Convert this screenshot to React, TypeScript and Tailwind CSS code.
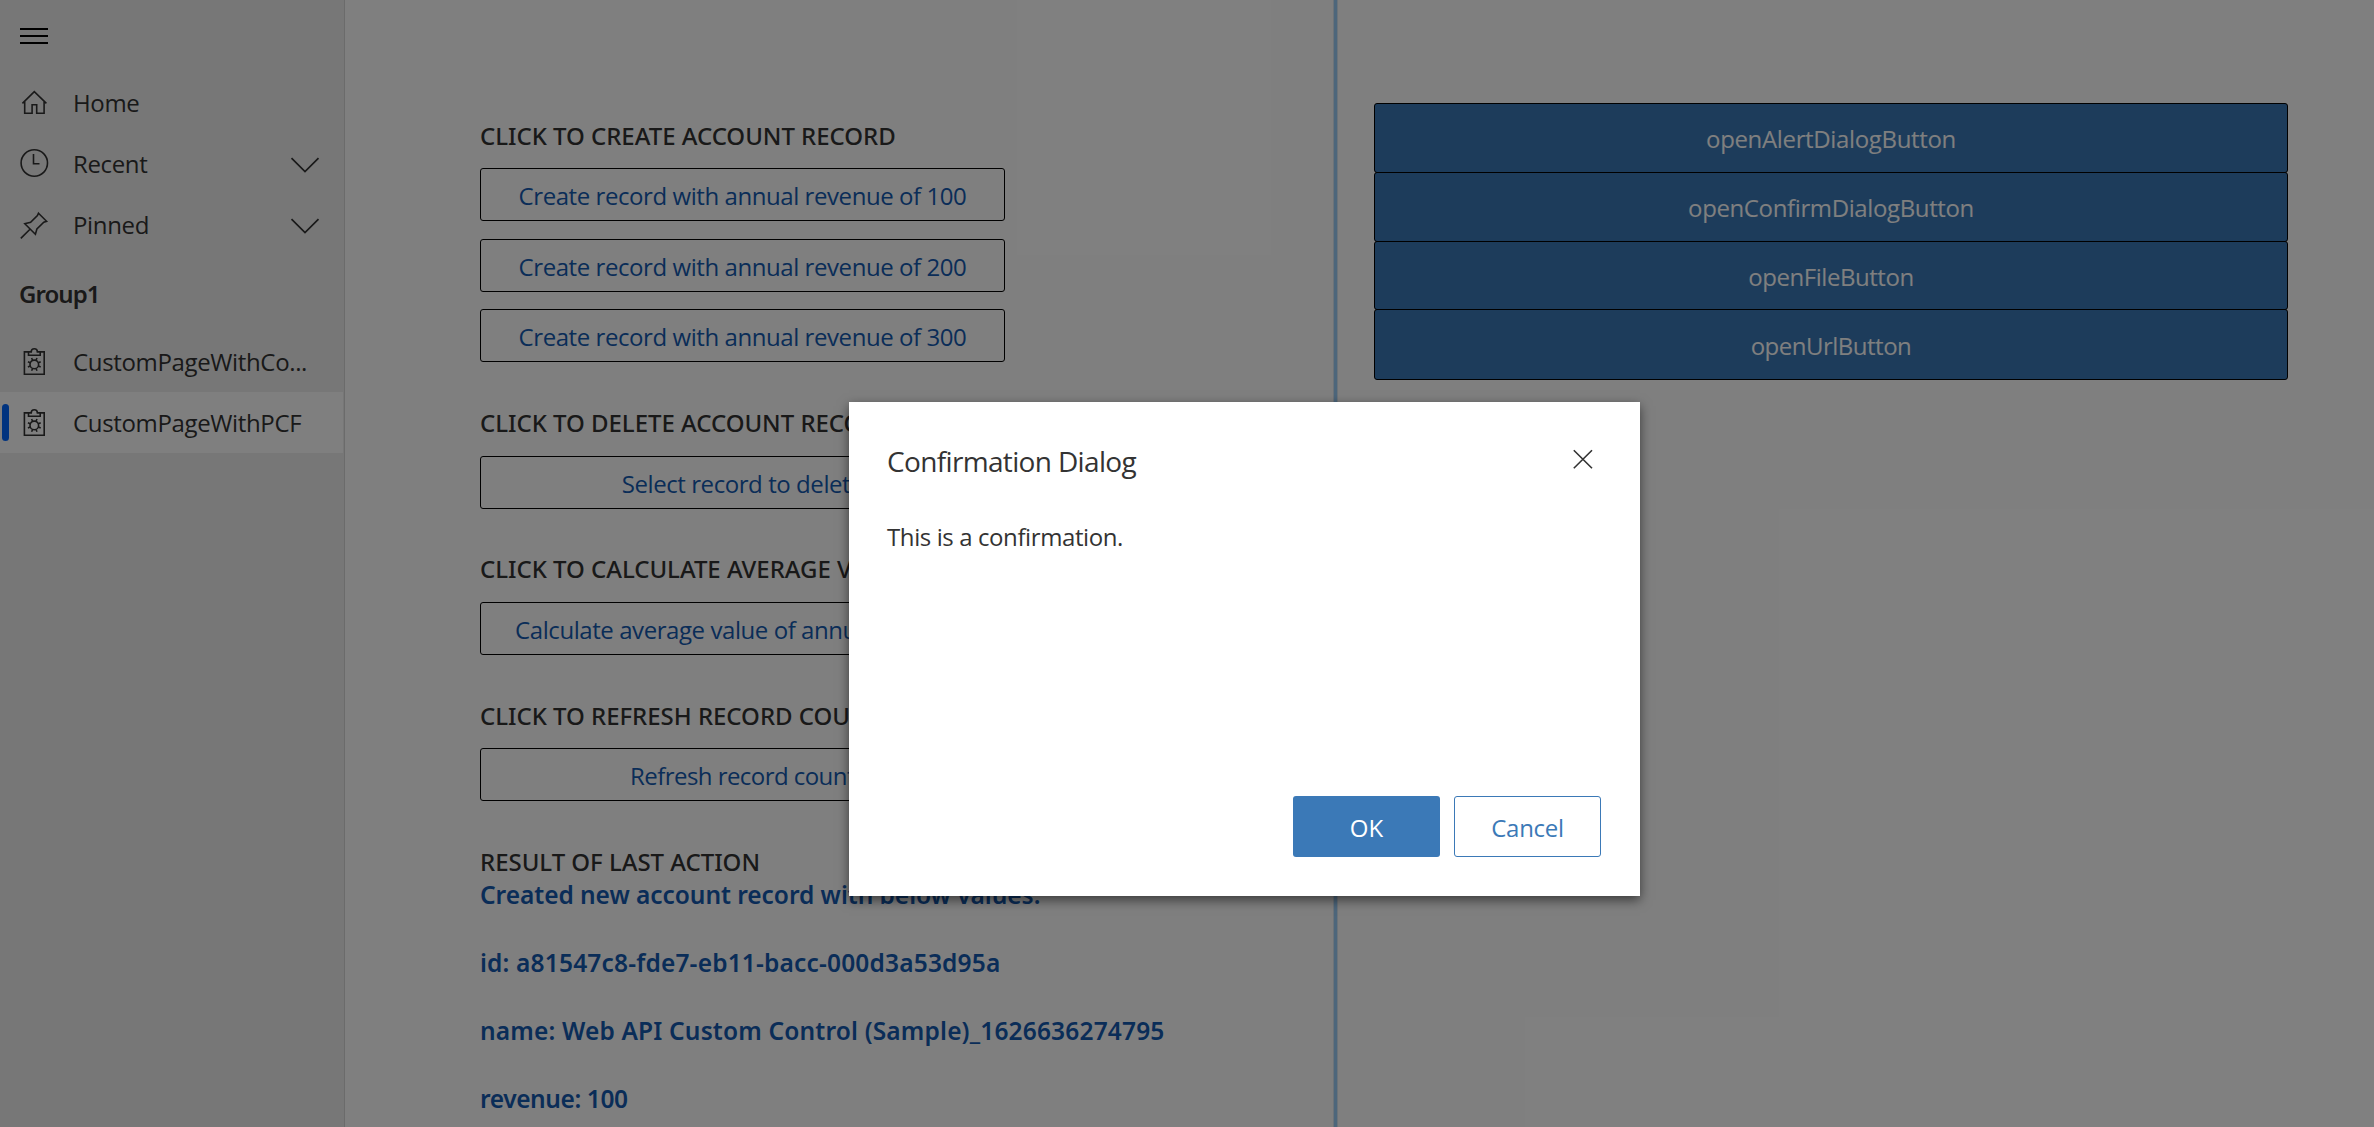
import type { ReactNode } from "react";

const HomeIcon = () => (
  <svg className="h-[61px] w-8 shrink-0" viewBox="0 0 32 61" fill="none" stroke="currentColor" strokeWidth="1.6">
    <path d="M4.4 31.4 16.3 19.6 28.4 31.4M6.7 29.4v11.9h7.4v-8.6h4.6v8.6h7.4V29.4" />
  </svg>
);

const ClockIcon = () => (
  <svg className="h-[61px] w-8 shrink-0" viewBox="0 0 32 61" fill="none" stroke="currentColor" strokeWidth="1.6">
    <circle cx="16.3" cy="30" r="13.2" />
    <path d="M15.5 21v9.8h6" />
  </svg>
);

const PinIcon = () => (
  <svg className="h-[61px] w-8 shrink-0" viewBox="0 0 32 61" fill="none" stroke="currentColor" strokeWidth="1.6">
    <path d="M20.5 19.2 28.6 27.3 25.8 28.2 18.9 35 17.4 40.3 6.8 29.7 12.6 28.2 19.4 21.6zM12 35.2 2.8 44.4" />
  </svg>
);

const ClipboardGearIcon = () => (
  <svg className="h-[61px] w-8 shrink-0" viewBox="0 0 32 61" fill="none" stroke="currentColor" strokeWidth="1.6">
    <path d="M10.5 20.9H6.4v22.3h19.8V20.9h-4.1" />
    <path d="M10.5 20.9v3.4h11.7v-3.4h-2.8a3.1 3.1 0 0 0-6.2 0z" />
    <circle cx="16.3" cy="33.4" r="4.3" />
    <path d="M14.6 29.3 13.6 27M18 29.3l1-2.3M14.6 37.5l-1 2.3M18 37.5l1 2.3M12.2 31.7l-2.3-1M12.2 35.1l-2.3 1M20.4 31.7l2.3-1M20.4 35.1l2.3 1" />
  </svg>
);

const Chevron = () => (
  <svg className="ml-auto mr-[23px] mt-0.5 h-4 w-[30px] shrink-0" viewBox="0 0 30 16" fill="none" stroke="currentColor" strokeWidth="1.7">
    <path d="M1.5 1.2 15 14.6 28.5 1.2" />
  </svg>
);

function NavItem({
  icon,
  label,
  chevron,
  active,
}: {
  icon: ReactNode;
  label: string;
  chevron?: boolean;
  active?: boolean;
}) {
  return (
    <div className={active ? "relative flex h-[61px] items-center bg-white pl-[18px]" : "relative flex h-[61px] items-center pl-[18px]"}>
      {active && <span className="absolute left-0.5 top-3 h-[37px] w-[7px] rounded-sm bg-[#0066ff]" />}
      {icon}
      <span className="ml-[23px] whitespace-nowrap tracking-[-0.35px]">{label}</span>
      {chevron && <Chevron />}
    </div>
  );
}

function Heading({ children }: { children: ReactNode }) {
  return (
    <h2 className="whitespace-nowrap font-['Noto_Sans',sans-serif] font-medium leading-[34px] tracking-[-0.03px]">{children}</h2>
  );
}

function OutlineButton({ children, tight }: { children: ReactNode; tight?: boolean }) {
  return (
    <button className="flex h-[53px] w-[525px] items-center justify-center whitespace-nowrap rounded-[3px] border border-black pt-0.5 leading-[34px] text-[#145ab0]">
      <span className={tight ? "tracking-[-0.55px]" : "tracking-[-0.43px]"}>{children}</span>
    </button>
  );
}

export default function App() {
  return (
    <div className="relative flex h-[1127px] w-[2374px] overflow-hidden bg-white font-['Open_Sans',sans-serif] text-[24px] text-[#333]">
      <nav className="flex w-[345px] shrink-0 flex-col border-r border-[#d6d6d6] bg-[#efefef] pr-px">
        <div className="flex h-[72px] items-start pl-5 pt-7 text-black">
          <div className="flex w-7 flex-col gap-[5px]">
            <span className="h-0.5 bg-black" />
            <span className="h-0.5 bg-black" />
            <span className="h-0.5 bg-black" />
          </div>
        </div>
        <NavItem icon={<HomeIcon />} label="Home" />
        <NavItem icon={<ClockIcon />} label="Recent" chevron />
        <div className="pb-px">
          <NavItem icon={<PinIcon />} label="Pinned" chevron />
        </div>
        <div className="flex h-[75px] items-center pl-[19px] font-['Noto_Sans',sans-serif] font-semibold tracking-[-0.95px]">
          Group1
        </div>
        <NavItem icon={<ClipboardGearIcon />} label="CustomPageWithCo..." />
        <NavItem icon={<ClipboardGearIcon />} label="CustomPageWithPCF" active />
      </nav>

      <main className="flex min-w-0 flex-1">
        <section className="flex w-[988px] shrink-0 flex-col items-start pl-[135px] pt-[119px]">
          <Heading>CLICK TO CREATE ACCOUNT RECORD</Heading>
          <div className="mt-[15px] flex flex-col">
            <OutlineButton>Create record with annual revenue of 100</OutlineButton>
            <div className="mb-[17px] mt-[18px]">
              <OutlineButton>Create record with annual revenue of 200</OutlineButton>
            </div>
            <OutlineButton>Create record with annual revenue of 300</OutlineButton>
          </div>
          <div className="mt-11 flex flex-col gap-4">
            <Heading>CLICK TO DELETE ACCOUNT RECORD</Heading>
            <OutlineButton>Select record to delete</OutlineButton>
          </div>
          <div className="mt-[43px] flex flex-col gap-4">
            <Heading>CLICK TO CALCULATE AVERAGE VALUE</Heading>
            <OutlineButton>Calculate average value of annual revenue</OutlineButton>
          </div>
          <div className="mt-11 flex flex-col gap-[15px]">
            <Heading>CLICK TO REFRESH RECORD COUNT</Heading>
            <OutlineButton tight>Refresh record count</OutlineButton>
          </div>
          <div className="mt-11">
            <Heading>RESULT OF LAST ACTION</Heading>
            <div className="-mt-px flex flex-col gap-[34px] whitespace-nowrap font-['Noto_Sans',sans-serif] text-[24.5px] font-semibold leading-[34px] text-[#145ab0]">
              <p className="tracking-[-0.05px]">Created new account record with below values:</p>
              <p className="tracking-[0.17px]">id: a81547c8-fde7-eb11-bacc-000d3a53d95a</p>
              <p className="tracking-[0.16px]">name: Web API Custom Control (Sample)_1626636274795</p>
              <p className="tracking-[-0.4px]">revenue: 100</p>
            </div>
          </div>
        </section>

        <div className="w-[5px] shrink-0 border-x border-[#d8e6f2] bg-[#9accf6]" />

        <section className="flex flex-1 flex-col pl-9 pr-[86px] pt-[103px] text-white">
          <button className="h-[70px] rounded-[3px] border border-black bg-[#3b79b7] pt-px tracking-[-0.35px]">openAlertDialogButton</button>
          <button className="-mt-px h-[70px] rounded-[3px] border border-black bg-[#3b79b7] pt-px tracking-[-0.38px]">openConfirmDialogButton</button>
          <button className="-mt-px h-[69px] rounded-[3px] border border-black bg-[#3b79b7] pt-[3px] tracking-[-0.45px]">openFileButton</button>
          <button className="-mt-px h-[71px] rounded-[3px] border border-black bg-[#3b79b7] pt-[2px] tracking-[-0.5px]">openUrlButton</button>
        </section>
      </main>

      <div className="absolute inset-0 bg-black/50 pl-[849px] pt-[402px]">
        <div
          role="dialog"
          className="flex h-[494px] w-[791px] flex-col bg-white pb-[39px] pl-[38px] pr-[39px] pt-[42px] shadow-[0_4px_11px_rgba(0,0,0,0.55)]"
        >
          <div className="flex items-start justify-between">
            <h1 className="text-[28px] leading-[34px] tracking-[-0.65px]">Confirmation Dialog</h1>
            <svg className="mr-2 mt-[5px] h-5 w-5" viewBox="0 0 20 20" fill="none" stroke="currentColor" strokeWidth="1.6">
              <path d="M.8 1.2 19 19.2M19 1.2.8 19.2" />
            </svg>
          </div>
          <p className="mt-[42px] leading-[34px] tracking-[-0.4px]">This is a confirmation.</p>
          <div className="mt-auto flex justify-end gap-3.5">
            <button className="h-[61px] w-[147px] rounded-[3px] bg-[#3b79b7] pt-0.5 text-white">OK</button>
            <button className="h-[61px] w-[147px] rounded-[3px] border border-[#3b79b7] pt-0.5 tracking-[-0.3px] text-[#3b79b7]">Cancel</button>
          </div>
        </div>
      </div>
    </div>
  );
}
